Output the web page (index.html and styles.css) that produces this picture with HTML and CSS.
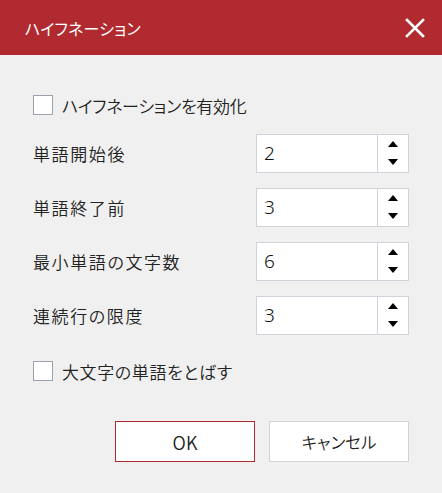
FILE: index.html
```html
<!DOCTYPE html>
<html lang="ja">
<head>
<meta charset="utf-8">
<link rel="stylesheet" href="styles.css">
</head>
<body>
<div class="dialog">
  <div class="titlebar">
    <span class="title">ハイフネーション</span>
    <span class="close" aria-label="閉じる">
      <svg width="20" height="20" viewBox="0 0 20 20"><path d="M2 2 L18 18 M18 2 L2 18" stroke="#fff" stroke-width="2.6" stroke-linecap="square" fill="none"/></svg>
    </span>
  </div>
  <div class="content">
    <label class="check first"><span class="box"></span><span class="check-label tight">ハイフネーションを有効化</span></label>
    <div class="rows">
      <div class="row"><span class="label">単語開始後</span><div class="spin"><span class="value">2</span><span class="arrows"><span class="up"></span><span class="down"></span></span></div></div>
      <div class="row"><span class="label">単語終了前</span><div class="spin"><span class="value">3</span><span class="arrows"><span class="up"></span><span class="down"></span></span></div></div>
      <div class="row"><span class="label">最小単語の文字数</span><div class="spin"><span class="value">6</span><span class="arrows"><span class="up"></span><span class="down"></span></span></div></div>
      <div class="row"><span class="label">連続行の限度</span><div class="spin"><span class="value">3</span><span class="arrows"><span class="up"></span><span class="down"></span></span></div></div>
    </div>
    <label class="check second"><span class="box"></span><span class="check-label">大文字の単語をとばす</span></label>
    <div class="buttons">
      <button class="btn ok">OK</button>
      <button class="btn">キャンセル</button>
    </div>
  </div>
</div>
</body>
</html>
```
FILE: styles.css
```css
html, body {
  margin: 0;
  padding: 0;
  background: #f0f0f0;
}
body {
  font-family: "Noto Sans CJK JP", "Noto Sans", sans-serif;
  font-feature-settings: "palt";
  font-weight: 350;
  color: #222;
}
.dialog {
  width: 442px;
  height: 493px;
  background: #f0f0f0;
}
.titlebar {
  height: 55px;
  background: #b02a30;
  display: flex;
  align-items: center;
  justify-content: space-between;
  padding: 0 17px 0 25px;
}
.title {
  color: #fff;
  font-size: 16px;
  font-weight: 400;
  letter-spacing: 0.2px;
}
.close {
  display: flex;
  width: 20px;
  height: 20px;
}
.content {
  display: flex;
  flex-direction: column;
  padding: 40px 33px 0 33px;
}
.check {
  display: flex;
  align-items: center;
  height: 20px;
  gap: 9px;
}
.box {
  width: 18px;
  height: 18px;
  border: 1px solid #9ca1ad;
  background: #fff;
}
.check-label {
  font-size: 17px;
  letter-spacing: 0.6px;
}
.check-label.tight {
  letter-spacing: -0.3px;
}
.rows {
  display: flex;
  flex-direction: column;
  gap: 15px;
  margin-top: 19px;
}
.row {
  display: flex;
  align-items: center;
  justify-content: space-between;
  height: 39px;
}
.label {
  font-size: 17px;
  letter-spacing: 1.6px;
}
.spin {
  width: 151px;
  height: 37px;
  border: 1px solid #d0d3da;
  background: #fff;
  display: flex;
}
.value {
  flex: 1;
  padding-left: 7px;
  font-family: "Noto Sans", sans-serif;
  font-weight: 300;
  font-size: 19px;
  line-height: 37px;
  color: #111;
}
.arrows {
  width: 31px;
  border-left: 1px solid #d0d3da;
  display: flex;
  flex-direction: column;
  align-items: center;
  justify-content: space-between;
  padding: 6px 0 7px;
  box-sizing: border-box;
}
.up, .down {
  width: 0;
  height: 0;
  border-left: 5.5px solid transparent;
  border-right: 5.5px solid transparent;
}
.up { border-bottom: 6px solid #000; }
.down { border-top: 6px solid #000; }
.second {
  margin-top: 26px;
}
.buttons {
  display: flex;
  justify-content: flex-end;
  gap: 14px;
  margin-top: 40px;
}
.btn {
  width: 140px;
  height: 41px;
  background: #fff;
  border: 1px solid #d0d3da;
  font-family: "Noto Sans CJK JP", "Noto Sans", sans-serif;
  font-feature-settings: "palt";
  font-weight: 350;
  font-size: 16.5px;
  color: #222;
  padding: 0;
}
.btn.ok {
  border-color: #b02a30;
  font-size: 18px;
}
```
